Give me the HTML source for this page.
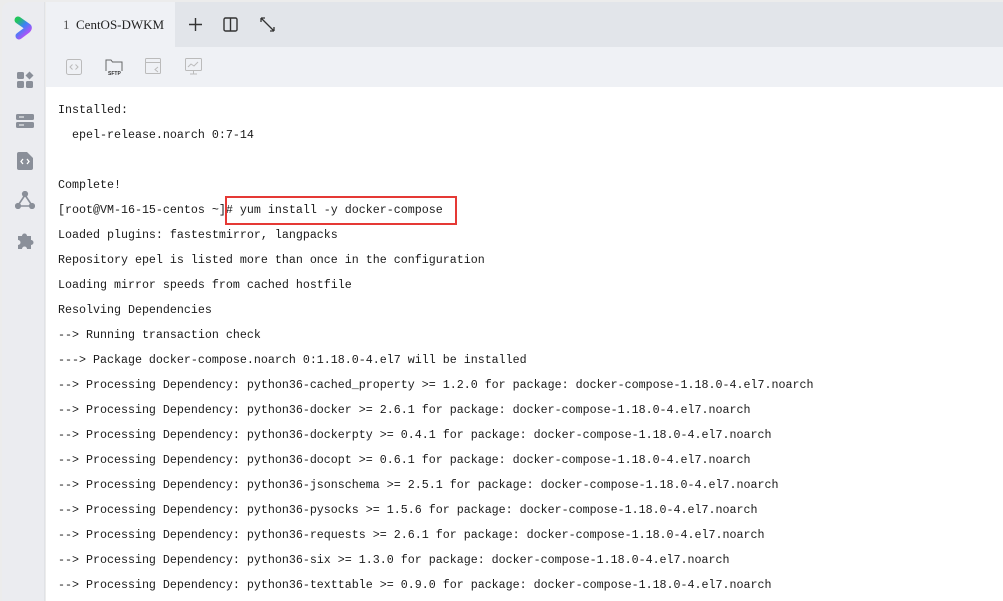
<!DOCTYPE html>
<html><head><meta charset="utf-8"><style>
*{margin:0;padding:0;box-sizing:border-box}
body{width:1003px;height:601px;overflow:hidden;background:#ececec;position:relative;font-family:"Liberation Sans",sans-serif}
.side{position:absolute;left:2px;top:2px;width:43px;height:599px;background:#ebecf0;border-top-left-radius:8px;border-right:1px solid #e0e2e6}
.tabbar{position:absolute;left:46px;top:2px;right:0;height:45px;background:#e2e5ea}
.tab{position:absolute;left:0;top:0;width:129px;height:45px;background:#eff1f5;font-family:"Liberation Serif",serif;font-size:13px;color:#222;line-height:45px;padding-left:17px}
.tool{position:absolute;left:46px;top:47px;right:0;height:40px;background:#eff1f5}
.term{position:absolute;left:46px;top:87px;right:0;bottom:0;background:#fff;font-family:"Liberation Mono",monospace;font-size:11.67px;color:#1a1a1a;padding-left:12px;padding-top:14px}
.term div{height:25px;line-height:18px;white-space:pre}
.box{position:absolute;left:225px;top:196px;width:232px;height:29px;border:2px solid #e53935}
.ic{position:absolute}
</style></head><body>
<div class="side">
<svg class="ic" style="left:11px;top:13px" width="22" height="26" viewBox="0 0 22 26"><defs><linearGradient id="g" x1="0" y1="0" x2="0.6" y2="1"><stop offset="0" stop-color="#22c55e"/><stop offset="0.5" stop-color="#3b82f6"/><stop offset="1" stop-color="#a855f7"/></linearGradient></defs><path d="M5 5 L15 12 Q16 13 14 15 L6 21" fill="none" stroke="url(#g)" stroke-width="7" stroke-linecap="round" stroke-linejoin="round"/></svg>
<svg class="ic" style="left:14px;top:69px" width="18" height="18" viewBox="0 0 18 18" fill="#8a8f99"><rect x="1" y="1" width="7" height="7" rx="1.5"/><rect x="1" y="10" width="7" height="7" rx="1.5"/><rect x="10" y="10" width="7" height="7" rx="1.5"/><path d="M13.5 0.5 L17.5 4.5 L13.5 8.5 L9.5 4.5Z"/></svg>
<svg class="ic" style="left:14px;top:111px" width="18" height="16" viewBox="0 0 18 16" fill="#8a8f99"><rect x="0" y="1" width="18" height="6" rx="1.5"/><rect x="0" y="9" width="18" height="6" rx="1.5"/><rect x="3" y="3.5" width="5" height="1" fill="#fff"/><rect x="3" y="11.5" width="5" height="1" fill="#fff"/></svg>
<svg class="ic" style="left:15px;top:150px" width="16" height="18" viewBox="0 0 16 18"><path d="M2 0h8l6 6v10a2 2 0 0 1-2 2H2a2 2 0 0 1-2-2V2a2 2 0 0 1 2-2z" fill="#8a8f99"/><path d="M6 7l-2 2.5 2 2.5M10 7l2 2.5-2 2.5" stroke="#fff" stroke-width="1.3" fill="none"/></svg>
<svg class="ic" style="left:13px;top:189px" width="20" height="18" viewBox="0 0 20 18" fill="none" stroke="#8a8f99" stroke-width="1.6"><path d="M10 4 L4 13 M10 4 L16 13 M6 15 H14"/><circle cx="10" cy="3" r="2.3" fill="#8a8f99"/><circle cx="3" cy="15" r="2.3" fill="#8a8f99"/><circle cx="17" cy="15" r="2.3" fill="#8a8f99"/></svg>
<svg class="ic" style="left:14px;top:229px" width="18" height="18" viewBox="0 0 18 18" fill="#8a8f99"><path d="M2 5h4a2.5 2.5 0 1 1 5 0h4v4a2.5 2.5 0 1 1 0 5v4H11a2.5 2.5 0 1 0-5 0H2v-4a2.5 2.5 0 1 0 0-5z"/></svg>
</div>
<div class="tabbar">
<div class="tab"><span style="color:#555">1</span>&nbsp;&nbsp;CentOS-DWKM</div>
<svg class="ic" style="left:143px;top:16px" width="13" height="13" viewBox="0 0 13 13" stroke="#333" stroke-width="1.4"><path d="M6.5 0v13M0 6.5h13"/></svg>
<svg class="ic" style="left:177px;top:15px" width="15" height="15" viewBox="0 0 15 15" fill="none" stroke="#333" stroke-width="1.4"><rect x="1" y="1" width="13" height="13" rx="1.5"/><path d="M7.5 1v13"/></svg>
<svg class="ic" style="left:214px;top:15px" width="15" height="15" viewBox="0 0 15 15" fill="none" stroke="#333" stroke-width="1.3"><path d="M1 1l13 13M1 1h4M1 1v4M14 14h-4M14 14v-4"/></svg>
</div>
<div class="tool">
<svg class="ic" style="left:20px;top:12px" width="16" height="16" viewBox="0 0 16 16" fill="none" stroke="#bbb"><rect x="0.5" y="0.5" width="15" height="15" rx="2"/><path d="M6.5 5.5L4 8l2.5 2.5M9.5 5.5L12 8l-2.5 2.5"/></svg>
<svg class="ic" style="left:59px;top:11px" width="18" height="18" viewBox="0 0 18 18" fill="none" stroke="#666"><path d="M1 13V2h5l1.5 2H17v9"/><text x="3" y="17" font-size="5" font-family="Liberation Sans" fill="#333" stroke="none" font-weight="bold">SFTP</text></svg>
<svg class="ic" style="left:99px;top:11px" width="17" height="17" viewBox="0 0 17 17" fill="none" stroke="#bbb"><rect x="0.5" y="0.5" width="15" height="15" rx="1"/><path d="M0.5 4.5h15M13 9l-3 2.5 3 2.5"/></svg>
<svg class="ic" style="left:139px;top:11px" width="17" height="17" viewBox="0 0 17 17" fill="none" stroke="#bbb"><rect x="0.5" y="0.5" width="16" height="12" rx="1"/><path d="M3 9l3-3 3 2 4-4M5 16h7M8.5 12.5V16"/></svg>
</div>
<div class="term">
<div>Installed:</div>
<div>  epel-release.noarch 0:7-14</div>
<div> </div>
<div>Complete!</div>
<div>[root@VM-16-15-centos ~]# yum install -y docker-compose</div>
<div>Loaded plugins: fastestmirror, langpacks</div>
<div>Repository epel is listed more than once in the configuration</div>
<div>Loading mirror speeds from cached hostfile</div>
<div>Resolving Dependencies</div>
<div>--&gt; Running transaction check</div>
<div>---&gt; Package docker-compose.noarch 0:1.18.0-4.el7 will be installed</div>
<div>--&gt; Processing Dependency: python36-cached_property &gt;= 1.2.0 for package: docker-compose-1.18.0-4.el7.noarch</div>
<div>--&gt; Processing Dependency: python36-docker &gt;= 2.6.1 for package: docker-compose-1.18.0-4.el7.noarch</div>
<div>--&gt; Processing Dependency: python36-dockerpty &gt;= 0.4.1 for package: docker-compose-1.18.0-4.el7.noarch</div>
<div>--&gt; Processing Dependency: python36-docopt &gt;= 0.6.1 for package: docker-compose-1.18.0-4.el7.noarch</div>
<div>--&gt; Processing Dependency: python36-jsonschema &gt;= 2.5.1 for package: docker-compose-1.18.0-4.el7.noarch</div>
<div>--&gt; Processing Dependency: python36-pysocks &gt;= 1.5.6 for package: docker-compose-1.18.0-4.el7.noarch</div>
<div>--&gt; Processing Dependency: python36-requests &gt;= 2.6.1 for package: docker-compose-1.18.0-4.el7.noarch</div>
<div>--&gt; Processing Dependency: python36-six &gt;= 1.3.0 for package: docker-compose-1.18.0-4.el7.noarch</div>
<div>--&gt; Processing Dependency: python36-texttable &gt;= 0.9.0 for package: docker-compose-1.18.0-4.el7.noarch</div>
</div>
<div class="box"></div>
</body></html>
